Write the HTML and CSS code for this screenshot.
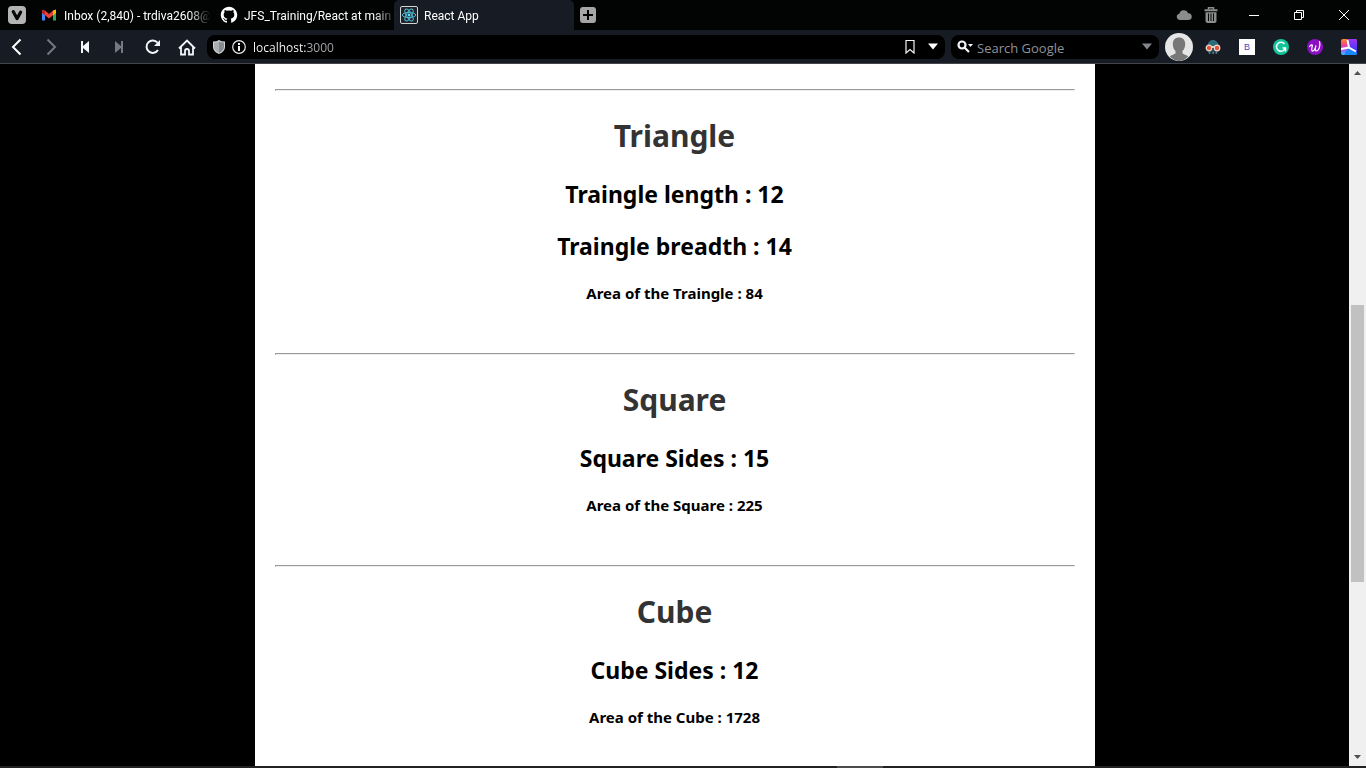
FILE: index.html
```html
<!DOCTYPE html>
<html lang="en">
<head>
<meta charset="utf-8">
<title>React App</title>
<link rel="stylesheet" href="styles.css">
</head>
<body>
<header class="browser">
  <div class="tabstrip">
    <button class="menu" aria-label="Menu">
      <svg width="18" height="18" viewBox="0 0 18 18"><rect width="18" height="18" rx="4" fill="#b4b4b4"/><path d="M5.2 5.6 9 12.600l3.600-6.400" fill="none" stroke="#050505" stroke-width="3.200" stroke-linecap="round" stroke-linejoin="round"/></svg>
    </button>
    <nav class="tabs" aria-label="Tabs">
      <a class="tab" href="#inbox">
        <svg width="18" height="18" viewBox="0 0 18 18"><path d="M2 5v9.500h3V7z" fill="#4285f4"/><path d="M13 7v7.500h3V5z" fill="#34a853"/><path d="M13 4.500 16 3.500V7l-3 2.500z" fill="#fbbc04"/><path d="M5 4.500 9 8l4-3.500v4.800L9 12.500 5 9.300z" fill="#ea4335"/><path d="M2 4.500Q3.200 2.800 5 4.500v4.800L2 7z" fill="#c5221f"/></svg>
        <span class="tab-title">Inbox (2,840) - trdiva2608@</span>
      </a>
      <a class="tab" href="#github">
        <svg width="18" height="18" viewBox="0 0 16 16"><path fill="#fff" d="M8 .7C3.900.7.7 4 .7 8c0 3.200 2.100 6 5 6.900.4.1.5-.2.5-.4v-1.400c-2 .5-2.500-.9-2.500-.9-.3-.8-.8-1-.8-1-.7-.5 0-.5 0-.5.7.1 1.100.8 1.100.8.7 1.100 1.700.8 2.200.6 0-.5.2-.8.4-1-1.600-.2-3.300-.8-3.300-3.600 0-.8.3-1.400.8-2-.1-.2-.4-1 .1-1.900 0 0 .6-.2 2 .7a7 7 0 0 1 3.600 0c1.400-.9 2-.7 2-.7.5.9.2 1.700.1 1.900.5.6.8 1.200.8 2 0 2.800-1.700 3.400-3.300 3.600.3.2.5.7.5 1.400v2c0 .2.1.5.5.4A7.300 7.300 0 0 0 8 .7z"/></svg>
        <span class="tab-title">JFS_Training/React at main ·</span>
      </a>
      <a class="tab tab-active" href="#app" aria-current="page">
        <svg width="18" height="18" viewBox="0 0 18 18"><rect x=".5" y=".5" width="17" height="17" rx="1.500" fill="#20232a" stroke="#d0d3d6"/><g fill="none" stroke="#4fb6d0"><ellipse cx="9" cy="9" rx="6.700" ry="2.600"/><ellipse cx="9" cy="9" rx="6.700" ry="2.600" transform="rotate(60 9 9)"/><ellipse cx="9" cy="9" rx="6.700" ry="2.600" transform="rotate(120 9 9)"/></g><circle cx="9" cy="9" r="1.400" fill="#61dafb"/></svg>
        <span class="tab-title">React App</span>
      </a>
    </nav>
    <button class="new-tab" aria-label="New tab">
      <svg width="16" height="16" viewBox="0 0 16 16"><rect width="16" height="16" rx="3" fill="#a6a6a6"/><path d="M8 3v10M3 8h10" stroke="#000" stroke-width="2"/></svg>
    </button>
    <div class="window-tools">
      <button class="tool" aria-label="Sync"><svg width="16" height="16" viewBox="0 0 16 16"><path d="M3.500 13a3.200 3.200 0 0 1-.2-6.300A4.600 4.600 0 0 1 12 6.200 3.400 3.400 0 0 1 12.600 13z" fill="#8c8c8c"/></svg></button>
      <button class="tool" aria-label="Closed tabs"><svg width="14" height="16" viewBox="0 0 14 16"><path d="M4.500 2.500V.8h5v1.700" fill="none" stroke="#8c8c8c" stroke-width="1.500"/><path d="M.5 2.200h13v2H.5zM1.500 5.200h11V14a2 2 0 0 1-2 2h-7a2 2 0 0 1-2-2z" fill="#8c8c8c"/><path d="M4.500 6.500V14M7 6.500V14M9.500 6.500V14" stroke="#050505"/></svg></button>
    </div>
    <div class="window-controls">
      <button class="control" aria-label="Minimize"><svg width="10" height="10" viewBox="0 0 10 10"><path d="M0 5.500h10" stroke="#fff"/></svg></button>
      <button class="control" aria-label="Restore"><svg width="10" height="10" viewBox="0 0 10 10"><path d="M.5 2.500h7v7h-7zM2.500 2.500v-2h7v7h-2" fill="none" stroke="#fff"/></svg></button>
      <button class="control" aria-label="Close"><svg width="10" height="10" viewBox="0 0 10 10"><path d="m0 0 10 10M10 0 0 10" stroke="#fff"/></svg></button>
    </div>
  </div>

  <div class="toolbar">
    <div class="nav">
      <button class="nav-button" aria-label="Back"><svg width="18" height="18" viewBox="0 0 18 18"><path d="M12.500 1.500 5 9l7.500 7.500" fill="none" stroke="#fff" stroke-width="2"/></svg></button>
      <button class="nav-button" aria-label="Forward"><svg width="18" height="18" viewBox="0 0 18 18"><path d="M5.500 1.500 13 9l-7.500 7.500" fill="none" stroke="#747981" stroke-width="2"/></svg></button>
      <button class="nav-button" aria-label="Rewind"><svg width="18" height="18" viewBox="0 0 18 18"><path d="M5 3h2v5l6-5v12L7 10v5H5z" fill="#f2f6fa"/></svg></button>
      <button class="nav-button" aria-label="Fast forward"><svg width="18" height="18" viewBox="0 0 18 18"><path d="M13 3h-2v5L5 3v12l6-5v5h2z" fill="#747981"/></svg></button>
      <button class="nav-button" aria-label="Reload"><svg width="18" height="18" viewBox="0 0 18 18"><path d="M13.500 4.700A6.200 6.200 0 1 0 14 12" fill="none" stroke="#f2f6fa" stroke-width="2"/><path d="M16 2v6h-6z" fill="#f2f6fa"/></svg></button>
      <button class="nav-button" aria-label="Home"><svg width="18" height="18" viewBox="0 0 18 18"><path d="M1 10.500 9 2.500l8 8M3 9v7.500h4V13a2 2 0 0 1 4 0v3.500h4V9" fill="none" stroke="#f2f6fa" stroke-width="1.800"/></svg></button>
    </div>
    <div class="field address">
      <svg width="12" height="14" viewBox="0 0 12 14"><path d="M0 1.500Q4 1.500 6 0q2 1.500 6 1.500V7q0 4.500-6 7-6-2.500-6-7z" fill="#d2d6d9"/><path d="M6 1.500q2 1 5 1V7q0 3.500-5 6z" fill="#858b90"/><path d="M1 2.500q3 0 5-1V13Q1 10.500 1 7z" fill="#a9aeb2"/></svg>
      <svg width="14" height="14" viewBox="0 0 14 14"><circle cx="7" cy="7" r="6.300" fill="none" stroke="#e6eaed" stroke-width="1.200"/><path d="M6 6h2v5H6zM6 3h2v2H6z" fill="#f2f6fa"/></svg>
      <input class="field-input url" type="text" aria-label="Address" value="localhost:3000">
      <button class="field-button" aria-label="Bookmark"><svg width="10" height="14" viewBox="0 0 10 14"><path d="M1 .5h8v12.500L5 9.500 1 13z" fill="none" stroke="#f2f6fa" stroke-width="1.200"/></svg></button>
      <button class="field-button" aria-label="Show history"><svg width="10" height="7" viewBox="0 0 10 7"><path d="M0 .5h10L5 6.500z" fill="#fff"/></svg></button>
    </div>
    <div class="field search">
      <button class="field-button" aria-label="Search engine"><svg width="16" height="14" viewBox="0 0 16 14"><circle cx="5" cy="5" r="3.500" fill="none" stroke="#f2f6fa" stroke-width="2.200"/><path d="m7.500 7.500 4.500 4.500" stroke="#f2f6fa" stroke-width="2.200"/><path d="M11 4h5l-2.500 3z" fill="#f2f6fa"/></svg></button>
      <input class="field-input query" type="text" aria-label="Search Google" placeholder="Search Google">
      <button class="field-button" aria-label="Search options"><svg width="10" height="7" viewBox="0 0 10 7"><path d="M0 .5h10L5 6.500z" fill="#83878b"/></svg></button>
    </div>
    <div class="extensions">
      <button class="nav-button" aria-label="Profile"><svg width="28" height="28" viewBox="0 0 28 28"><circle cx="14" cy="14" r="14" fill="#e6e6e6"/><path d="M14 4.500c4 0 6.200 2.700 6.200 6.500 0 2.800-1 5.500-2.700 7v2.500c2 1.200 4.300 1.600 5.700 3A14 14 0 0 1 14 28a14 14 0 0 1-9.200-4.500c1.400-1.400 3.700-1.800 5.700-3V18c-1.700-1.500-2.700-4.200-2.700-7 0-3.800 2.200-6.500 6.200-6.500z" fill="#787878"/></svg></button>
      <button class="nav-button" aria-label="Reader extension"><svg width="16" height="16" viewBox="0 0 16 16"><path d="M2.500 8C2.500 3 5 1 8 1s5.500 2 5.500 7z" fill="#2f6b7a"/><path d="M3 14.500V10h10v4.500h-1.500V13h-2v1.500h-3V13h-2v1.500z" fill="#214653"/><circle cx="4" cy="9" r="2.800" fill="#e55437" stroke="#f3d9d1" stroke-width="1.200"/><circle cx="12" cy="9" r="2.800" fill="#e55437" stroke="#f3d9d1" stroke-width="1.200"/><path d="M7 8h2" stroke="#fff" stroke-width="1.500"/><path d="M4 14h1.500M7.500 14H9M10.500 14H12" stroke="#91b8c1"/></svg></button>
      <button class="nav-button" aria-label="B extension"><span class="letter-badge">B</span></button>
      <button class="nav-button" aria-label="Writing assistant"><svg width="16" height="16" viewBox="0 0 16 16"><circle cx="8" cy="8" r="8" fill="#15c39a"/><path d="M11.500 5A4.500 4.500 0 1 0 12.300 9H9.500M12.500 9v3.500" fill="none" stroke="#fff" stroke-width="1.500"/></svg></button>
      <button class="nav-button" aria-label="Wordtune"><svg width="16" height="16" viewBox="0 0 16 16"><circle cx="8" cy="8" r="8" fill="#8d0fc4"/><path d="M2.500 7.500C4 5.500 6 5 5.200 7.500 4.500 10 4.300 12.300 6 12c1.700-.5 2.300-3 3-5.500-1 3-1.200 5.500.3 5.500C12 12 13.500 7 12.500 2.500" fill="none" stroke="#fff" stroke-width="1.200" stroke-linecap="round"/></svg></button>
      <button class="nav-button" aria-label="Color extension"><svg width="16" height="16" viewBox="0 0 16 16"><defs><linearGradient id="left" x2="0" y2="1"><stop stop-color="#ff8a21"/><stop offset=".4" stop-color="#f0409a"/><stop offset=".7" stop-color="#a45cff"/><stop offset="1" stop-color="#20d0ff"/></linearGradient><linearGradient id="right" x2="0" y2="1"><stop stop-color="#a035f5"/><stop offset="1" stop-color="#2b38ff"/></linearGradient></defs><rect width="16" height="16" rx="2" fill="url(#left)"/><path d="M6 0h8a2 2 0 0 1 2 2v12L8 8z" fill="url(#right)"/><path d="m7 9 9 5a2 2 0 0 1-2 2H3z" fill="#1787ff"/><path d="M6.500 1 8 8.500l7 4M8 8.500 0 10" fill="none" stroke="#fff" stroke-width="2"/></svg></button>
    </div>
  </div>
</header>

<div class="viewport">
  <main class="page">
    <article class="panel">
      <section class="shape">
        <hr class="rule">
        <h1 class="shape-name">Triangle</h1>
        <h2 class="dimension">Traingle length : 12</h2>
        <h2 class="dimension">Traingle breadth : 14</h2>
        <h4 class="area">Area of the Traingle : 84</h4>
      </section>
      <section class="shape">
        <hr class="rule">
        <h1 class="shape-name">Square</h1>
        <h2 class="dimension">Square Sides : 15</h2>
        <h4 class="area">Area of the Square : 225</h4>
      </section>
      <section class="shape">
        <hr class="rule">
        <h1 class="shape-name">Cube</h1>
        <h2 class="dimension">Cube Sides : 12</h2>
        <h4 class="area">Area of the Cube : 1728</h4>
      </section>
    </article>
  </main>
  <div class="scrollbar" aria-hidden="true">
    <svg class="arrow" width="17" height="17" viewBox="0 0 17 17"><path d="M5 11h7L8.500 7z" fill="#505050"/></svg>
    <div class="track"><div class="thumb"></div></div>
    <svg class="arrow" width="17" height="17" viewBox="0 0 17 17"><path d="M5 6h7l-3.500 4z" fill="#505050"/></svg>
  </div>
</div>
<footer class="edge"><span class="edge-mark"></span></footer>
</body>
</html>
```
FILE: styles.css
```css
* {
  box-sizing: border-box;
}

body {
  margin: 0;
  height: 100vh;
  display: flex;
  flex-direction: column;
  overflow: hidden;
  background: #000;
  font-family: "Noto Sans", "Open Sans", sans-serif;
}

button {
  display: flex;
  align-items: center;
  justify-content: center;
  padding: 0;
  border: 0;
  background: none;
}

svg {
  display: block;
  flex: none;
}

.browser {
  flex: none;
  font-family: "Open Sans", "Noto Sans", sans-serif;
}

.tabstrip {
  display: flex;
  align-items: center;
  height: 30px;
  background: #020303;
}

.menu {
  width: 34px;
  height: 30px;
}

.tabs {
  display: flex;
  align-self: stretch;
}

.tab {
  display: flex;
  align-items: center;
  gap: 6px;
  width: 180px;
  padding: 0 4px 0 6px;
  color: #fff;
  font-family: Roboto, "Open Sans", sans-serif;
  font-size: 12px;
  line-height: 18px;
  text-decoration: none;
}

.tab-title {
  flex: 1;
  padding-top: 1px;
  white-space: nowrap;
  mask-image: linear-gradient(to right, #000 85%, transparent);
}

.tab-active {
  border-radius: 5px 5px 0 0;
  background: #171b23;
}

.new-tab {
  margin-left: 6px;
}

.window-tools {
  display: flex;
  gap: 12px;
  margin-left: auto;
  margin-right: 13px;
}

.window-controls {
  display: flex;
}

.control {
  width: 45px;
  height: 30px;
}

.toolbar {
  display: flex;
  align-items: center;
  height: 34px;
  border-bottom: 1px solid #43474c;
  background: #171b23;
}

.nav,
.extensions {
  display: flex;
}

.nav-button {
  width: 34px;
  height: 32px;
}

.field {
  display: flex;
  align-items: center;
  height: 24px;
  border-radius: 8px;
  background: #000;
}

.address {
  flex: 1;
  gap: 7px;
  margin: 0 6px 0 3px;
  padding: 0 4px 0 6px;
}

.search {
  gap: 4px;
  width: 208px;
  margin-right: 3px;
  padding: 0 4px 0 6px;
}

.field-input {
  flex: 1;
  min-width: 0;
  padding: 2px 0 0;
  border: 0;
  outline: 0;
  background: none;
  color: #fff;
  font-family: inherit;
  font-size: 12px;
}

.url {
  background: linear-gradient(to right, #fff 54px, #a9adb1 54px);
  background-clip: text;
  color: transparent;
  caret-color: #fff;
}

.query {
  font-size: 13px;
}

.field-input::placeholder {
  color: #8f9397;
  opacity: 1;
}

.field-button {
  min-width: 16px;
  height: 24px;
}

.letter-badge {
  width: 16px;
  background: #fff;
  color: #4a46c8;
  font-family: "Liberation Sans", sans-serif;
  font-size: 9px;
  line-height: 16px;
}

.viewport {
  flex: 1;
  display: flex;
  min-height: 0;
}

.page {
  flex: 1;
  display: flex;
  justify-content: center;
  overflow: hidden;
}

.panel {
  width: 100%;
  max-width: 840px;
  padding: 25px 20px;
  background: #fff;
  color: #000;
  text-align: center;
}

.shape {
  padding-bottom: 49px;
}

.rule {
  margin: 0 0 23px;
}

.shape-name {
  margin: 0 0 20px;
  color: #333;
  font-size: 30px;
  line-height: 44px;
}

.dimension {
  margin: 0 0 20px;
  font-size: 23px;
  line-height: 32px;
}

.area {
  margin: 0;
  font-size: 15px;
  line-height: 22px;
}

.scrollbar {
  display: flex;
  flex-direction: column;
  width: 17px;
  background: #f0f0f0;
}

.track {
  flex: 1;
  display: grid;
  grid-template-rows: 224fr 277fr 167fr;
  padding: 0 2px;
}

.thumb {
  grid-row: 2;
  background: #c1c1c1;
}

.edge {
  display: grid;
  grid-template-columns: 837fr 46fr 483fr;
  flex: none;
  height: 2px;
  background: #222;
}

.edge-mark {
  grid-column: 2;
  background: #4c4c4c;
}
```
